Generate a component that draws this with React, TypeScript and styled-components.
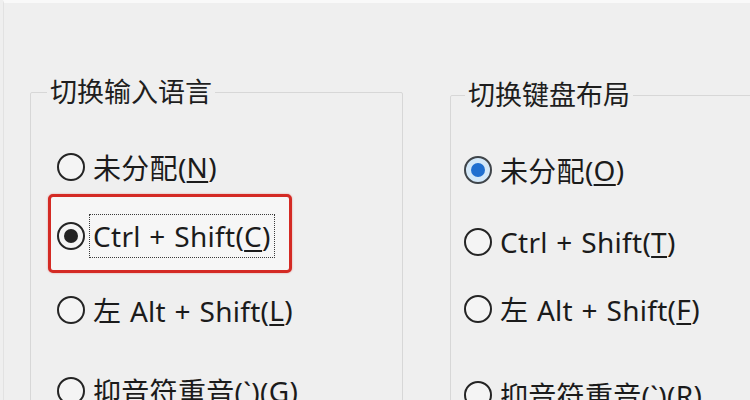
import React from "react";
import styled, { createGlobalStyle } from "styled-components";

const Global = createGlobalStyle`
  html, body { margin: 0; padding: 0; background: #efefef; overflow: hidden; }
  body {
    width: 750px; height: 400px;
    font-family: "Noto Sans", "Noto Sans CJK SC", sans-serif;
    color: #1b1b1b;
  }
`;

const Window = styled.div`
  box-sizing: border-box;
  width: 750px;
  height: 400px;
  margin-left: 3px;
  border-left: 1px solid #e2e2e2;
  border-top: 3px solid #f9f9f9;
  background: #efefef;
  display: flex;
  align-items: flex-start;
  padding-left: 26px;
  gap: 47px;
  overflow: hidden;
`;

const Group = styled.fieldset<{ $width: number; $top: number }>`
  box-sizing: border-box;
  flex-shrink: 0;
  min-width: 0;
  width: ${(p) => p.$width}px;
  height: 420px;
  margin: ${(p) => p.$top}px 0 0;
  padding: 0;
  border: 1px solid #d7d7d7;
  border-radius: 2px;
`;

const Title = styled.legend<{ $indent: number }>`
  margin-left: ${(p) => p.$indent}px;
  padding: 0 3px;
  font-size: 27px;
  line-height: 32px;
  color: #1e1e1e;
`;

const Options = styled.div<{ $left: number }>`
  display: flex;
  flex-direction: column;
  padding: 37px 0 0 ${(p) => p.$left}px;
`;

const Row = styled.div<{ $space: number; $marked?: boolean }>`
  position: relative;
  z-index: 0;
  display: flex;
  align-items: center;
  gap: 4px;
  height: 44px;
  margin-top: ${(p) => p.$space}px;
  font-size: 28px;
  white-space: nowrap;

  ${(p) =>
    p.$marked &&
    `
    &::before {
      content: "";
      position: absolute;
      z-index: -1;
      left: -9px;
      top: -20px;
      width: 244px;
      height: 79px;
      box-sizing: border-box;
      border: 3px solid #d42a24;
      border-radius: 5px;
      background: #f6f6f6;
      box-shadow: 0 0 2px rgba(212, 42, 36, 0.45);
    }
  `}
`;

const Radio = styled.span<{ $state: "off" | "dark" | "blue" }>`
  box-sizing: border-box;
  flex-shrink: 0;
  width: 28px;
  height: 28px;
  border-radius: 50%;
  border: 2.5px solid ${(p) => (p.$state === "blue" ? "#3f4449" : "#242424")};
  background: ${(p) => (p.$state === "blue" ? "#d3e8f9" : "#f4f4f4")};
  display: flex;
  align-items: center;
  justify-content: center;

  &::after {
    content: "";
    display: ${(p) => (p.$state === "off" ? "none" : "block")};
    width: 14px;
    height: 14px;
    border-radius: 50%;
    background: ${(p) => (p.$state === "blue" ? "#1f6fd0" : "#222")};
  }
`;

const Label = styled.span<{ $focus?: boolean }>`
  display: flex;
  align-items: center;
  height: 42px;
  padding: 0 3px;
  border: 1px ${(p) => (p.$focus ? "dotted #3a3a3a" : "solid transparent")};
  letter-spacing: 0.3px;
  word-spacing: 1px;
`;

const Key = styled.u`
  text-decoration-thickness: 2px;
  text-underline-offset: 3px;
`;

type Opt = {
  pre: string;
  key: string;
  state: "off" | "dark" | "blue";
  space: number;
  marked?: boolean;
};

const leftOpts: Opt[] = [
  { pre: "未分配(", key: "N", state: "off", space: 0 },
  { pre: "Ctrl + Shift(", key: "C", state: "dark", space: 25, marked: true },
  { pre: "左 Alt + Shift(", key: "L", state: "off", space: 30 },
  { pre: "抑音符重音(`)(", key: "G", state: "off", space: 37 },
];

const rightOpts: Opt[] = [
  { pre: "未分配(", key: "O", state: "blue", space: 0 },
  { pre: "Ctrl + Shift(", key: "T", state: "off", space: 28 },
  { pre: "左 Alt + Shift(", key: "F", state: "off", space: 23 },
  { pre: "抑音符重音(`)(", key: "R", state: "off", space: 42 },
];

function OptionList({ items, left }: { items: Opt[]; left: number }) {
  return (
    <Options $left={left}>
      {items.map((o) => (
        <Row key={o.pre + o.key} $space={o.space} $marked={o.marked}>
          <Radio $state={o.state} />
          <Label $focus={o.marked}>
            {o.pre}
            <Key>{o.key}</Key>)
          </Label>
        </Row>
      ))}
    </Options>
  );
}

export default function App() {
  return (
    <>
      <Global />
      <Window>
        <Group $width={373} $top={73}>
          <Title $indent={16}>切换输入语言</Title>
          <OptionList items={leftOpts} left={26} />
        </Group>
        <Group $width={320} $top={76}>
          <Title $indent={14}>切换键盘布局</Title>
          <OptionList items={rightOpts} left={13} />
        </Group>
      </Window>
    </>
  );
}
